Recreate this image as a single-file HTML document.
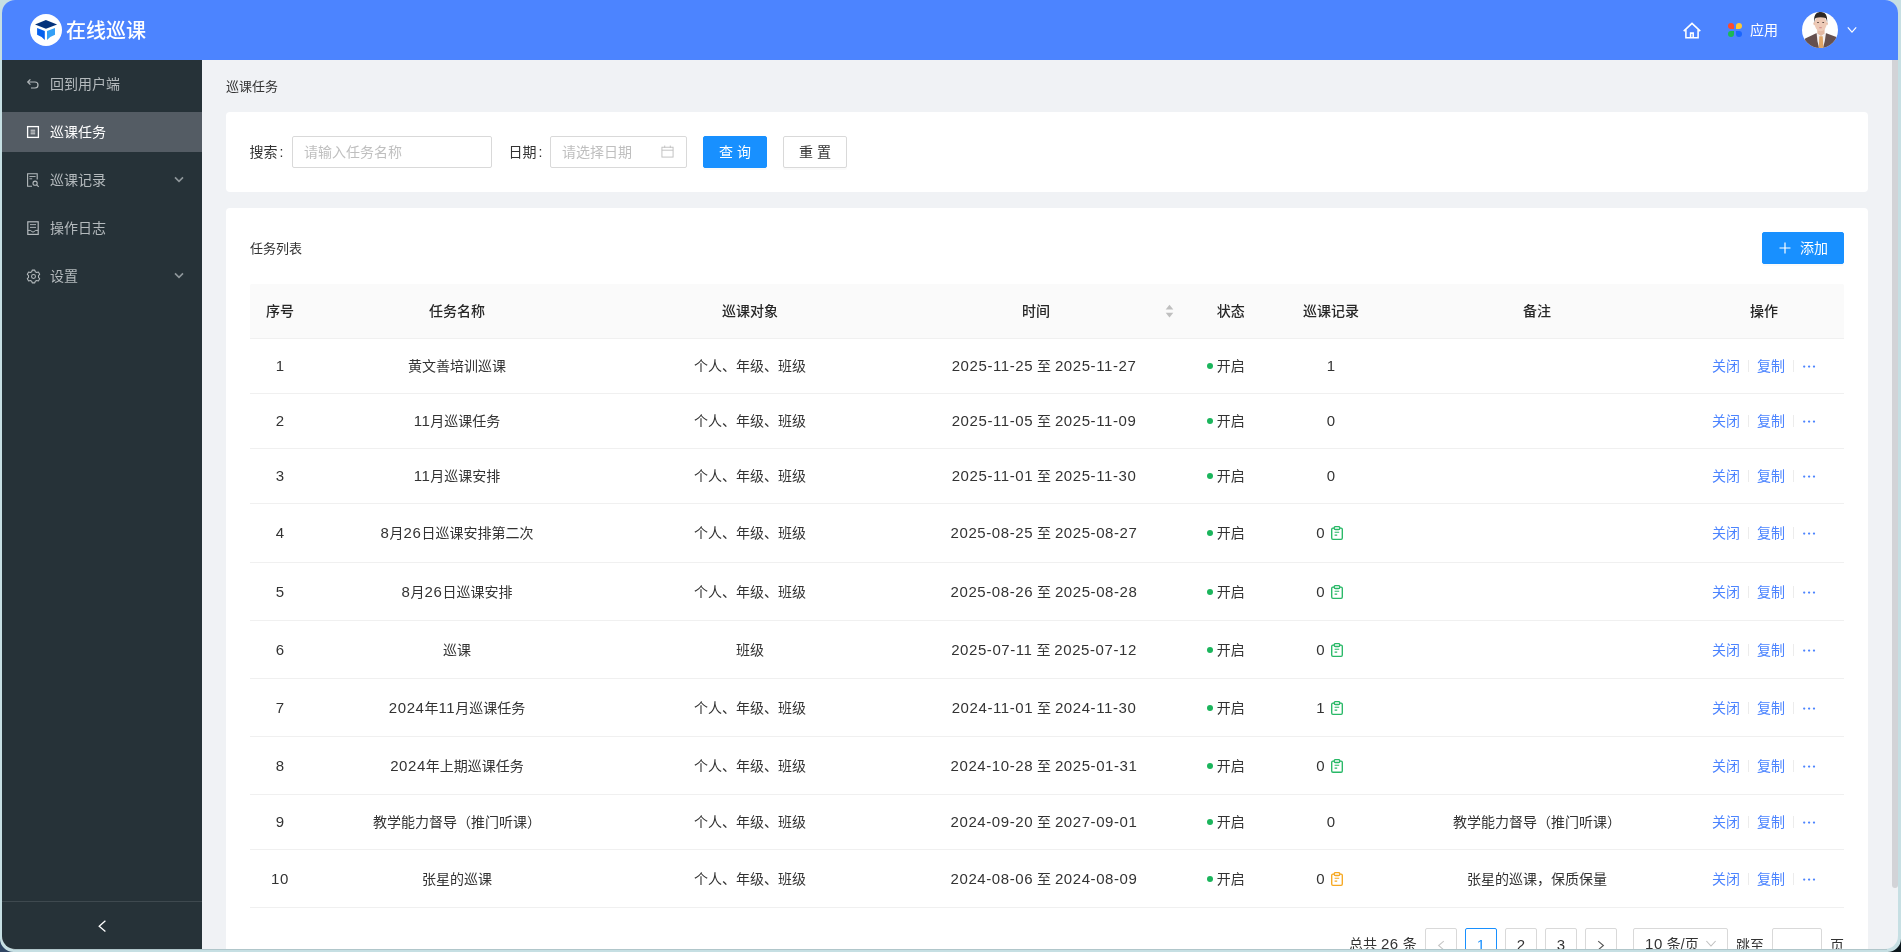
<!DOCTYPE html>
<html lang="zh-CN">
<head>
<meta charset="utf-8">
<title>在线巡课</title>
<style>
*{box-sizing:border-box;margin:0;padding:0}
html,body{width:1901px;height:952px;overflow:hidden}
body{background:#c6dfe3;font-family:"Liberation Sans","Noto Sans CJK SC",sans-serif;font-size:14px;color:#333;position:relative}
.cornerL{position:absolute;left:0;bottom:0;width:20px;height:20px;background:#2f4563}
.cornerR{position:absolute;right:0;bottom:0;width:20px;height:20px;background:#0b171c}
.frame{position:absolute;left:0;top:0;width:1901px;height:952px;background:#c6dfe3;border-radius:0 0 13.5px 13.5px}
.win{position:absolute;left:2px;top:0;width:1896px;height:949px;border-radius:13px;overflow:hidden;background:#f0f2f5}
.page{position:absolute;left:-2px;top:0;width:1901px;height:952px;will-change:transform}
.abs{position:absolute}
.hdr{position:absolute;left:0;top:0;width:1901px;height:60px;background:#4c84ff}
.side{position:absolute;left:0;top:60px;width:202px;height:892px;background:#263238}
.mi{position:absolute;left:0;width:202px;height:40px;color:#b4babd;font-size:14px;line-height:40px}
.mi.on{background:#545c64;color:#fff}
.mi span{position:absolute;left:50px;top:0;white-space:nowrap}
.mi svg{position:absolute}
.card{position:absolute;background:#fff;border-radius:4px}
.t{position:absolute;white-space:nowrap;line-height:20px}
.inp{position:absolute;height:32px;border:1px solid #d9d9d9;border-radius:2px;background:#fff;color:#bfbfbf;line-height:30px;padding-left:11px;white-space:nowrap}
.btn{position:absolute;height:32px;border-radius:2px;box-shadow:0 2px 0 rgba(0,0,0,.02);line-height:30px;text-align:center;border:1px solid #d9d9d9;background:#fff;color:#333;white-space:nowrap}
.btn.pri{background:#1890ff;border-color:#1890ff;color:#fff}
/* table */
.th{position:absolute;left:250px;top:284px;width:1594px;height:55px;background:#fafafa;border-bottom:1px solid #f0f0f0;border-radius:2px 2px 0 0}
.th div{position:absolute;top:17px;line-height:20px;font-weight:500;color:#262626;text-align:center;white-space:nowrap}
.tr{position:absolute;left:250px;width:1594px;border-bottom:1px solid #f0f0f0}
.tr>div{position:absolute;top:50%;margin-top:-10.5px;line-height:20px;text-align:center;white-space:nowrap;height:20px}
.c1{left:0;width:60px}.c2{left:60px;width:294px}.c3{left:354px;width:292px}.c4{left:646px;width:296px}
.c5{left:942.7px;width:76px}.c6{left:1019px;width:124px}.c7{left:1142px;width:290px}.c8{left:1434px;width:160px}
.n{font-size:15px;letter-spacing:.58px}
.d{font-size:15px}
.dot{position:absolute;left:14.3px;top:7px;width:6px;height:6px;border-radius:50%;background:#1bb55c}
.c8 a{color:#4c84ff;text-decoration:none}
.c8 i{display:inline-block;width:1px;height:12px;background:#ececec;margin:0 8px;vertical-align:-1px}
.c8 svg{display:inline-block;vertical-align:-2px}
.ico{display:inline-block;vertical-align:-2px;margin-left:6px;margin-right:3.2px}
.tr.big>div{margin-top:-10px}
.pg{position:absolute;top:928px;width:32px;height:32px;border:1px solid #d9d9d9;border-radius:2px;background:#fff;text-align:center;line-height:31px;color:#333}
.pg svg{position:absolute;left:11px;top:10.5px}
.pg.on{border-color:#1890ff;color:#1890ff}
</style>
</head>
<body>
<div class="cornerL"></div><div class="cornerR"></div>
<div class="frame"></div>
<div style="position:absolute;left:13px;top:949px;width:1874px;height:1px;background:#b0c6ca"></div>
<div class="win"><div class="page">
<!-- HEADER -->
<div class="hdr">
  <svg class="abs" style="left:30px;top:14px" width="32" height="32" viewBox="0 0 32 32">
    <circle cx="16" cy="16" r="16" fill="#fff"/>
    <path d="M15.9 6 L27.1 10.4 L15.95 14.8 L5 10.4 Z" fill="#04327c"/>
    <path d="M7.1 14.1 L14.8 17 L14.8 26 Q12 22.6 7.1 20.8 Z" fill="#0560ee"/>
    <path d="M25 14.1 L17 17 L17 26 Q19.8 22.6 25 20.8 Z" fill="#35a0f6"/>
  </svg>
  <div class="t" style="left:66px;top:15.5px;font-size:20px;line-height:30px;color:#fff;font-weight:500">在线巡课</div>
  <!-- home -->
  <svg class="abs" style="left:1683px;top:21.5px" width="18" height="17" viewBox="0 0 18 17" fill="none" stroke="#fff" stroke-width="1.55" stroke-linejoin="miter">
    <path d="M.7 9.1 L9 1.4 L17.3 9.1"/>
    <path d="M2.9 7.6 V15.8 H15.1 V7.6"/>
    <path d="M7.6 15.8 V11.1 H10.2 V15.8"/>
  </svg>
  <!-- apps -->
  <div class="abs" style="left:1727.7px;top:22.6px;width:6.3px;height:6.3px;background:#ff4a2b;border-radius:3.2px 3.2px 0 3.2px"></div>
  <div class="abs" style="left:1735.9px;top:22.6px;width:6.3px;height:6.3px;background:#ffc933;border-radius:3.2px 3.2px 3.2px 0"></div>
  <div class="abs" style="left:1727.7px;top:30.9px;width:6.3px;height:6.3px;background:#1db954;border-radius:3.2px 0 3.2px 3.2px"></div>
  <div class="abs" style="left:1735.9px;top:30.9px;width:6.3px;height:6.3px;background:#1a66ff;border-radius:0 3.2px 3.2px 3.2px"></div>
  <div class="t" style="left:1750px;top:20px;color:#fff">应用</div>
  <!-- avatar -->
  <svg class="abs" style="left:1802px;top:12px" width="36" height="36" viewBox="0 0 36 36">
    <defs><clipPath id="av"><circle cx="18" cy="18" r="18"/></clipPath></defs>
    <g clip-path="url(#av)">
      <rect width="36" height="36" fill="#fefefe"/>
      <path d="M1 36 L3.2 26.4 L14.2 21.2 L24.3 21.2 L34.4 24.9 L36 36 Z" fill="#65504f"/>
      <path d="M14.6 21 L24 21 L22.8 29 L21 36 L17 36 L15.4 29 Z" fill="#f4efee"/>
      <path d="M15.3 16 H22.6 V21.4 L19 24 L15.3 21.4 Z" fill="#e2b9a3"/>
      <path d="M17.3 24.2 L20.7 24.2 L21.4 36 L16.8 36 Z" fill="#e0a566"/>
      <ellipse cx="18.6" cy="11.6" rx="6.1" ry="7.7" fill="#edcab7"/>
      <ellipse cx="12.3" cy="11.6" rx=".9" ry="1.6" fill="#e6bfaa"/><ellipse cx="25" cy="11.6" rx=".9" ry="1.6" fill="#e6bfaa"/>
      <path d="M12.1 10.6 Q11.2 0 18.6 -0.1 Q26 0 25.1 10.6 Q24.8 7 23.6 5.9 Q18.6 4.6 13.6 5.9 Q12.4 7 12.1 10.6 Z" fill="#2e2824"/>
      <ellipse cx="16" cy="10.5" rx="1" ry=".55" fill="#4a3a35"/><ellipse cx="21.2" cy="10.5" rx="1" ry=".55" fill="#4a3a35"/>
      <ellipse cx="18.5" cy="15.7" rx="1.5" ry=".6" fill="#d58e8a"/>
    </g>
  </svg>
  <svg class="abs" style="left:1846px;top:25px" width="12" height="10" viewBox="0 0 12 10" fill="none" stroke="#fff" stroke-width="1.2"><path d="M1.8 2.4 L6 7.2 L10.2 2.4"/></svg>
</div>
<!-- SIDEBAR -->
<div class="side">
  <div class="mi" style="top:4px">
    <svg style="left:26px;top:12px" width="14" height="14" viewBox="0 0 14 14" fill="none" stroke="#b4babd" stroke-width="1.2"><path d="M2 6 H9 A3 3 0 0 1 9 12 H5"/><path d="M4.4 3.3 L1.7 6 L4.4 8.7"/></svg>
    <span>回到用户端</span></div>
  <div class="mi on" style="top:52px">
    <svg style="left:26px;top:13px" width="14" height="14" viewBox="0 0 14 14" fill="none" stroke="#fff"><rect x="1.6" y="1.6" width="10.8" height="10.8" stroke-width="1.3"/><path d="M4.6 5.2 H9.2 M4.6 7 H9.2 M4.6 8.8 H9.2" stroke-width=".8"/></svg>
    <span>巡课任务</span></div>
  <div class="mi" style="top:100px">
    <svg style="left:26px;top:12px" width="14" height="16" viewBox="0 0 14 16" fill="none" stroke="#b4babd" stroke-width="1.1"><path d="M6 14.2 H1.6 V1.7 H11.2 V7.5"/><path d="M3.4 4.5 H9.6 M3.4 6.8 H6.2" stroke-width=".9"/><circle cx="9.1" cy="11.2" r="2.1"/><path d="M10.7 12.8 L12.7 14.8"/></svg>
    <span>巡课记录</span>
    <svg style="left:173px;top:15px" width="12" height="10" viewBox="0 0 12 10" fill="none" stroke="#8f979b" stroke-width="1.6"><path d="M2 2.4 L6 6.4 L10 2.4"/></svg></div>
  <div class="mi" style="top:148px">
    <svg style="left:26px;top:12px" width="14" height="16" viewBox="0 0 14 16" fill="none" stroke="#b4babd" stroke-width="1.2"><rect x="1.8" y="1.8" width="10.4" height="12.6"/><path d="M4 4.6 H10 M4 7.4 H10" stroke-width=".9"/><path d="M2 10.4 H4.2 L7 12.2 L9.8 10.4 H12" stroke-width="1"/></svg>
    <span>操作日志</span></div>
  <div class="mi" style="top:196px">
    <svg style="left:25.5px;top:12.5px" width="15" height="15" viewBox="0 0 16 16" fill="none" stroke="#b4babd" stroke-width="1.1" stroke-linejoin="round"><path d="M6.6 1.2 H9.4 L9.9 3 L11.4 3.8 L13.2 3.3 L14.6 5.7 L13.3 7 V8.9 L14.6 10.3 L13.2 12.7 L11.4 12.2 L9.9 13 L9.4 14.8 H6.6 L6.1 13 L4.6 12.2 L2.8 12.7 L1.4 10.3 L2.7 8.9 V7 L1.4 5.7 L2.8 3.3 L4.6 3.8 L6.1 3 Z"/><circle cx="8" cy="8" r="2.1"/></svg>
    <span>设置</span>
    <svg style="left:173px;top:15px" width="12" height="10" viewBox="0 0 12 10" fill="none" stroke="#8f979b" stroke-width="1.6"><path d="M2 2.4 L6 6.4 L10 2.4"/></svg></div>
  <div class="abs" style="left:0;top:841px;width:202px;height:1px;background:#3e494f"></div>
  <svg class="abs" style="left:96px;top:859px" width="12" height="14" viewBox="0 0 12 14" fill="none" stroke="#fff" stroke-width="1.3"><path d="M9.4 1.8 L3.2 7.2 L9.4 12.6"/></svg>
</div>
<!-- CONTENT -->
<div class="t" style="left:226px;top:77px;font-size:13px">巡课任务</div>
<div class="card" style="left:226px;top:112px;width:1642px;height:80px"></div>
<div class="t" style="left:249.6px;top:142px">搜索<span style="margin-left:2px">:</span></div>
<div class="inp" style="left:292px;top:136px;width:200px">请输入任务名称</div>
<div class="t" style="left:508.5px;top:142px">日期<span style="margin-left:2px">:</span></div>
<div class="inp" style="left:550px;top:136px;width:137px">请选择日期
  <svg class="abs" style="left:110.3px;top:8.2px" width="13" height="13" viewBox="0 0 14 14" fill="none" stroke="#bfbfbf" stroke-width="1"><rect x="1" y="2.4" width="12" height="10.6"/><path d="M1 5.6 H13 M4 .6 V3 M10 .6 V3"/></svg>
</div>
<div class="btn pri" style="left:703px;top:136px;width:64px">查 询</div>
<div class="btn" style="left:783px;top:136px;width:64px">重 置</div>

<div class="card" style="left:226px;top:208px;width:1642px;height:760px"></div>
<div class="t" style="left:250px;top:239px;font-size:13px">任务列表</div>
<div class="btn pri" style="left:1762px;top:232px;width:82px">
  <svg class="abs" style="left:16px;top:9px" width="12" height="12" viewBox="0 0 12 12" stroke="#fff" stroke-width="1.2"><path d="M6 .5 V11.5 M.5 6 H11.5"/></svg>
  <span style="position:absolute;left:37px;top:0">添加</span>
</div>

<div class="th">
  <div class="c1">序号</div><div class="c2">任务名称</div><div class="c3">巡课对象</div>
  <div class="c4" style="left:638px">时间</div>
  <svg class="abs" style="left:915px;top:20px" width="9" height="14" viewBox="0 0 9 14" fill="#bfbfbf"><path d="M4.5 .8 L8.3 5.6 H.7 Z M4.5 13.6 L8.3 8.8 H.7 Z"/></svg>
  <div class="c5">状态</div><div class="c6">巡课记录</div><div class="c7">备注</div><div class="c8">操作</div>
</div>
<div class="tr" style="top:339px;height:55px"><div class="c1"><span class="d">1</span></div><div class="c2">黄文善培训巡课</div><div class="c3">个人、年级、班级</div><div class="c4"><span class="n">2025-11-25</span> 至 <span class="n">2025-11-27</span></div><div class="c5"><span class="dot"></span>开启</div><div class="c6"><span class="d">1</span></div><div class="c7"></div><div class="c8"><a>关闭</a><i></i><a>复制</a><i></i><svg width="14" height="14" viewBox="0 0 14 14" fill="#4c84ff"><circle cx="2.2" cy="7.6" r="1.15"/><circle cx="7.1" cy="7.6" r="1.15"/><circle cx="12" cy="7.6" r="1.15"/></svg></div></div>
<div class="tr" style="top:394px;height:55px"><div class="c1"><span class="d">2</span></div><div class="c2"><span class="n">11</span>月巡课任务</div><div class="c3">个人、年级、班级</div><div class="c4"><span class="n">2025-11-05</span> 至 <span class="n">2025-11-09</span></div><div class="c5"><span class="dot"></span>开启</div><div class="c6"><span class="d">0</span></div><div class="c7"></div><div class="c8"><a>关闭</a><i></i><a>复制</a><i></i><svg width="14" height="14" viewBox="0 0 14 14" fill="#4c84ff"><circle cx="2.2" cy="7.6" r="1.15"/><circle cx="7.1" cy="7.6" r="1.15"/><circle cx="12" cy="7.6" r="1.15"/></svg></div></div>
<div class="tr" style="top:449px;height:55px"><div class="c1"><span class="d">3</span></div><div class="c2"><span class="n">11</span>月巡课安排</div><div class="c3">个人、年级、班级</div><div class="c4"><span class="n">2025-11-01</span> 至 <span class="n">2025-11-30</span></div><div class="c5"><span class="dot"></span>开启</div><div class="c6"><span class="d">0</span></div><div class="c7"></div><div class="c8"><a>关闭</a><i></i><a>复制</a><i></i><svg width="14" height="14" viewBox="0 0 14 14" fill="#4c84ff"><circle cx="2.2" cy="7.6" r="1.15"/><circle cx="7.1" cy="7.6" r="1.15"/><circle cx="12" cy="7.6" r="1.15"/></svg></div></div>
<div class="tr big" style="top:504px;height:59px"><div class="c1"><span class="d">4</span></div><div class="c2"><span class="n">8</span>月<span class="n">26</span>日巡课安排第二次</div><div class="c3">个人、年级、班级</div><div class="c4"><span class="n">2025-08-25</span> 至 <span class="n">2025-08-27</span></div><div class="c5"><span class="dot"></span>开启</div><div class="c6"><span class="d">0</span><svg class="ico" width="12" height="14" viewBox="0 0 12 14" fill="none" stroke="#27b866" stroke-width="1.35"><rect x=".7" y="2.1" width="10.6" height="11.2" rx="1.2"/><rect x="3.2" y=".6" width="5.6" height="2.9" rx="1.3" fill="#fff"/><path d="M3.6 6.3 H8.2 M3.6 9.1 H6.2" stroke-width="1.1"/></svg></div><div class="c7"></div><div class="c8"><a>关闭</a><i></i><a>复制</a><i></i><svg width="14" height="14" viewBox="0 0 14 14" fill="#4c84ff"><circle cx="2.2" cy="7.6" r="1.15"/><circle cx="7.1" cy="7.6" r="1.15"/><circle cx="12" cy="7.6" r="1.15"/></svg></div></div>
<div class="tr big" style="top:563px;height:58px"><div class="c1"><span class="d">5</span></div><div class="c2"><span class="n">8</span>月<span class="n">26</span>日巡课安排</div><div class="c3">个人、年级、班级</div><div class="c4"><span class="n">2025-08-26</span> 至 <span class="n">2025-08-28</span></div><div class="c5"><span class="dot"></span>开启</div><div class="c6"><span class="d">0</span><svg class="ico" width="12" height="14" viewBox="0 0 12 14" fill="none" stroke="#27b866" stroke-width="1.35"><rect x=".7" y="2.1" width="10.6" height="11.2" rx="1.2"/><rect x="3.2" y=".6" width="5.6" height="2.9" rx="1.3" fill="#fff"/><path d="M3.6 6.3 H8.2 M3.6 9.1 H6.2" stroke-width="1.1"/></svg></div><div class="c7"></div><div class="c8"><a>关闭</a><i></i><a>复制</a><i></i><svg width="14" height="14" viewBox="0 0 14 14" fill="#4c84ff"><circle cx="2.2" cy="7.6" r="1.15"/><circle cx="7.1" cy="7.6" r="1.15"/><circle cx="12" cy="7.6" r="1.15"/></svg></div></div>
<div class="tr big" style="top:621px;height:58px"><div class="c1"><span class="d">6</span></div><div class="c2">巡课</div><div class="c3">班级</div><div class="c4"><span class="n">2025-07-11</span> 至 <span class="n">2025-07-12</span></div><div class="c5"><span class="dot"></span>开启</div><div class="c6"><span class="d">0</span><svg class="ico" width="12" height="14" viewBox="0 0 12 14" fill="none" stroke="#27b866" stroke-width="1.35"><rect x=".7" y="2.1" width="10.6" height="11.2" rx="1.2"/><rect x="3.2" y=".6" width="5.6" height="2.9" rx="1.3" fill="#fff"/><path d="M3.6 6.3 H8.2 M3.6 9.1 H6.2" stroke-width="1.1"/></svg></div><div class="c7"></div><div class="c8"><a>关闭</a><i></i><a>复制</a><i></i><svg width="14" height="14" viewBox="0 0 14 14" fill="#4c84ff"><circle cx="2.2" cy="7.6" r="1.15"/><circle cx="7.1" cy="7.6" r="1.15"/><circle cx="12" cy="7.6" r="1.15"/></svg></div></div>
<div class="tr big" style="top:679px;height:58px"><div class="c1"><span class="d">7</span></div><div class="c2"><span class="n">2024</span>年<span class="n">11</span>月巡课任务</div><div class="c3">个人、年级、班级</div><div class="c4"><span class="n">2024-11-01</span> 至 <span class="n">2024-11-30</span></div><div class="c5"><span class="dot"></span>开启</div><div class="c6"><span class="d">1</span><svg class="ico" width="12" height="14" viewBox="0 0 12 14" fill="none" stroke="#27b866" stroke-width="1.35"><rect x=".7" y="2.1" width="10.6" height="11.2" rx="1.2"/><rect x="3.2" y=".6" width="5.6" height="2.9" rx="1.3" fill="#fff"/><path d="M3.6 6.3 H8.2 M3.6 9.1 H6.2" stroke-width="1.1"/></svg></div><div class="c7"></div><div class="c8"><a>关闭</a><i></i><a>复制</a><i></i><svg width="14" height="14" viewBox="0 0 14 14" fill="#4c84ff"><circle cx="2.2" cy="7.6" r="1.15"/><circle cx="7.1" cy="7.6" r="1.15"/><circle cx="12" cy="7.6" r="1.15"/></svg></div></div>
<div class="tr big" style="top:737px;height:58px"><div class="c1"><span class="d">8</span></div><div class="c2"><span class="n">2024</span>年上期巡课任务</div><div class="c3">个人、年级、班级</div><div class="c4"><span class="n">2024-10-28</span> 至 <span class="n">2025-01-31</span></div><div class="c5"><span class="dot"></span>开启</div><div class="c6"><span class="d">0</span><svg class="ico" width="12" height="14" viewBox="0 0 12 14" fill="none" stroke="#27b866" stroke-width="1.35"><rect x=".7" y="2.1" width="10.6" height="11.2" rx="1.2"/><rect x="3.2" y=".6" width="5.6" height="2.9" rx="1.3" fill="#fff"/><path d="M3.6 6.3 H8.2 M3.6 9.1 H6.2" stroke-width="1.1"/></svg></div><div class="c7"></div><div class="c8"><a>关闭</a><i></i><a>复制</a><i></i><svg width="14" height="14" viewBox="0 0 14 14" fill="#4c84ff"><circle cx="2.2" cy="7.6" r="1.15"/><circle cx="7.1" cy="7.6" r="1.15"/><circle cx="12" cy="7.6" r="1.15"/></svg></div></div>
<div class="tr" style="top:795px;height:55px"><div class="c1"><span class="d">9</span></div><div class="c2">教学能力督导（推门听课）</div><div class="c3">个人、年级、班级</div><div class="c4"><span class="n">2024-09-20</span> 至 <span class="n">2027-09-01</span></div><div class="c5"><span class="dot"></span>开启</div><div class="c6"><span class="d">0</span></div><div class="c7">教学能力督导（推门听课）</div><div class="c8"><a>关闭</a><i></i><a>复制</a><i></i><svg width="14" height="14" viewBox="0 0 14 14" fill="#4c84ff"><circle cx="2.2" cy="7.6" r="1.15"/><circle cx="7.1" cy="7.6" r="1.15"/><circle cx="12" cy="7.6" r="1.15"/></svg></div></div>
<div class="tr big" style="top:850px;height:58px"><div class="c1"><span class="n">10</span></div><div class="c2">张星的巡课</div><div class="c3">个人、年级、班级</div><div class="c4"><span class="n">2024-08-06</span> 至 <span class="n">2024-08-09</span></div><div class="c5"><span class="dot"></span>开启</div><div class="c6"><span class="d">0</span><svg class="ico" width="12" height="14" viewBox="0 0 12 14" fill="none" stroke="#f6a821" stroke-width="1.35"><rect x=".7" y="2.1" width="10.6" height="11.2" rx="1.2"/><rect x="3.2" y=".6" width="5.6" height="2.9" rx="1.3" fill="#fff"/><path d="M3.6 6.3 H8.2 M3.6 9.1 H6.2" stroke-width="1.1"/></svg></div><div class="c7">张星的巡课，保质保量</div><div class="c8"><a>关闭</a><i></i><a>复制</a><i></i><svg width="14" height="14" viewBox="0 0 14 14" fill="#4c84ff"><circle cx="2.2" cy="7.6" r="1.15"/><circle cx="7.1" cy="7.6" r="1.15"/><circle cx="12" cy="7.6" r="1.15"/></svg></div></div>

<!-- pagination -->
<div class="t" style="left:1349px;top:934px">总共 <span class="n">26</span> 条</div>
<div class="pg" style="left:1425px"><svg width="8" height="12" viewBox="0 0 8 12" fill="none" stroke="#c8c8c8" stroke-width="1.1"><path d="M6.8 1.2 L1.6 5.5 L6.8 9.8"/></svg></div>
<div class="pg on" style="left:1465px"><span class="d">1</span></div>
<div class="pg" style="left:1505px"><span class="d">2</span></div>
<div class="pg" style="left:1545px"><span class="d">3</span></div>
<div class="pg" style="left:1585px"><svg width="8" height="12" viewBox="0 0 8 12" fill="none" stroke="#555" stroke-width="1.1"><path d="M1.2 1.2 L6.4 5.5 L1.2 9.8"/></svg></div>
<div class="pg" style="left:1633px;width:95px;text-align:left;padding-left:11px;line-height:30px"><span class="n">10</span> 条/页
  <svg class="abs" style="left:71.3px;top:10px" width="12" height="10" viewBox="0 0 12 10" fill="none" stroke="#bfbfbf" stroke-width="1.1"><path d="M1.4 2 L6 7 L10.6 2"/></svg>
</div>
<div class="t" style="left:1736px;top:935px">跳至</div>
<div class="pg" style="left:1772px;width:50px"></div>
<div class="t" style="left:1830px;top:935px">页</div>
<!-- scrollbar -->
<div class="abs" style="left:1892px;top:60px;width:6px;height:828px;background:#d2d3d7;border-radius:0 0 3px 3px"></div>

</div></div>
</body>
</html>
